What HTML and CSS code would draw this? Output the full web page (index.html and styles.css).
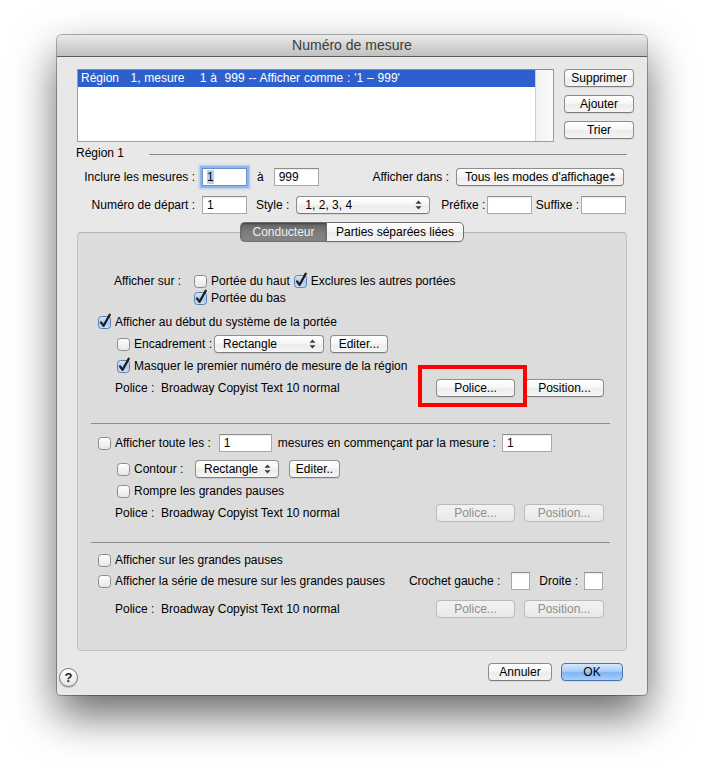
FILE: index.html
```html
<!DOCTYPE html>
<html lang="fr">
<head>
<meta charset="utf-8">
<title>Numéro de mesure</title>
<link rel="stylesheet" href="styles.css">
</head>
<body>
<svg class="defs" aria-hidden="true">
  <defs>
    <linearGradient id="gOff" x1="0" y1="0" x2="0" y2="1">
      <stop offset="0" stop-color="#ffffff"/>
      <stop offset="1" stop-color="#e6e6e6"/>
    </linearGradient>
    <linearGradient id="gOn" x1="0" y1="0" x2="0" y2="1">
      <stop offset="0" stop-color="#dbe9fa"/>
      <stop offset="0.5" stop-color="#a9c9ef"/>
      <stop offset="1" stop-color="#c8e0fa"/>
    </linearGradient>
    <g id="cbOff"><rect x="0.5" y="0.5" width="12" height="12" rx="3" fill="url(#gOff)" stroke="#8a8a8a"/></g>
    <g id="cbOn"><rect x="0.5" y="0.5" width="12" height="12" rx="3" fill="url(#gOn)" stroke="#5d7fae"/><path d="M3 6.3 L5.6 9.8 L11.8 -1.4" fill="none" stroke="#1b1b1b" stroke-width="2.2" stroke-linecap="round" stroke-linejoin="round"/></g>
    <g id="arrows"><path d="M0.5 3.8 L3.5 0.5 L6.5 3.8 Z M0.5 6.2 L3.5 9.5 L6.5 6.2 Z" fill="#3a3a3a"/></g>
  </defs>
</svg>

<div class="stage">
  <div class="window">
    <div class="titlebar">Numéro de mesure</div>
    <div class="content">
      <div class="top">
        <div class="list">
          <div class="list-rows">
            <div class="list-row sel">Région   1, mesure    1 à  999 -- Afficher comme : '1 – 999'</div>
          </div>
          <div class="list-scroll"></div>
        </div>
        <div class="side">
          <div class="btn">Supprimer</div>
          <div class="btn">Ajouter</div>
          <div class="btn">Trier</div>
        </div>
      </div>

      <div class="group-title"><span>Région 1</span><span class="rule"></span></div>

      <div class="frow frow1">
        <span class="flabel">Inclure les mesures :</span>
        <span class="field focus w45"><span class="hl">1</span></span>
        <span class="t-a">à</span>
        <span class="field w45 f999">999</span>
        <span class="t-dans">Afficher dans :</span>
        <span class="popup w168">Tous les modes d'affichage<svg class="arr" viewBox="0 0 7 10"><use href="#arrows"/></svg></span>
      </div>

      <div class="frow frow2">
        <span class="flabel">Numéro de départ :</span>
        <span class="field w45">1</span>
        <span class="t-style">Style :</span>
        <span class="popup w134">1, 2, 3, 4<svg class="arr" viewBox="0 0 7 10"><use href="#arrows"/></svg></span>
        <span class="t-pre">Préfixe :</span>
        <span class="field w45"></span>
        <span class="t-suf">Suffixe :</span>
        <span class="field w45 last"></span>
      </div>

      <div class="tabbox">
        <div class="tabs">
          <div class="tab sel">Conducteur</div>
          <div class="tab other">Parties séparées liées</div>
        </div>

        <div class="r r1">
          <span class="lab-sur">Afficher sur :</span>
          <span class="cb"><svg viewBox="0 0 13 13"><use href="#cbOff"/></svg>Portée du haut</span>
          <span class="cb cb-excl"><svg viewBox="0 0 13 13"><use href="#cbOn"/></svg>Exclures les autres portées</span>
        </div>
        <div class="r r2">
          <span class="cb"><svg viewBox="0 0 13 13"><use href="#cbOn"/></svg>Portée du bas</span>
        </div>
        <div class="r r3">
          <span class="cb"><svg viewBox="0 0 13 13"><use href="#cbOn"/></svg>Afficher au début du système de la portée</span>
        </div>
        <div class="r r4 i1">
          <span class="cb cbw97"><svg viewBox="0 0 13 13"><use href="#cbOff"/></svg>Encadrement :</span>
          <span class="popup w110">Rectangle<svg class="arr" viewBox="0 0 7 10"><use href="#arrows"/></svg></span>
          <span class="btn w58 ml6">Editer...</span>
        </div>
        <div class="r r5 i1">
          <span class="cb"><svg viewBox="0 0 13 13"><use href="#cbOn"/></svg>Masquer le premier numéro de mesure de la région</span>
        </div>
        <div class="r r6">
          <span class="police">Police :  Broadway Copyist Text 10 normal</span>
          <span class="btn w79 push hilite">Police...</span>
          <span class="btn w79 ml10">Position...</span>
        </div>

        <div class="sep sep1"></div>

        <div class="r s2r1">
          <span class="cb"><svg viewBox="0 0 13 13"><use href="#cbOff"/></svg>Afficher toute les :</span>
          <span class="field w53 ml8">1</span>
          <span class="t-mes">mesures en commençant par la mesure :</span>
          <span class="field w50 ml6">1</span>
        </div>
        <div class="r s2r2 i1">
          <span class="cb cbw78"><svg viewBox="0 0 13 13"><use href="#cbOff"/></svg>Contour :</span>
          <span class="popup w84">Rectangle<svg class="arr" viewBox="0 0 7 10"><use href="#arrows"/></svg></span>
          <span class="btn w51 ml10">Editer..</span>
        </div>
        <div class="r s2r3 i1">
          <span class="cb"><svg viewBox="0 0 13 13"><use href="#cbOff"/></svg>Rompre les grandes pauses</span>
        </div>
        <div class="r s2r4">
          <span class="police">Police :  Broadway Copyist Text 10 normal</span>
          <span class="btn dis w79 push">Police...</span>
          <span class="btn dis w80 ml9">Position...</span>
        </div>

        <div class="sep sep2"></div>

        <div class="r s3r1">
          <span class="cb"><svg viewBox="0 0 13 13"><use href="#cbOff"/></svg>Afficher sur les grandes pauses</span>
        </div>
        <div class="r s3r2">
          <span class="cb"><svg viewBox="0 0 13 13"><use href="#cbOff"/></svg>Afficher la série de mesure sur les grandes pauses</span>
          <span class="t-cro">Crochet gauche :</span>
          <span class="field w19 ml11"></span>
          <span class="t-dro">Droite :</span>
          <span class="field w19 ml6 mr1"></span>
        </div>
        <div class="r s3r3">
          <span class="police">Police :  Broadway Copyist Text 10 normal</span>
          <span class="btn dis w79 push">Police...</span>
          <span class="btn dis w80 ml9">Position...</span>
        </div>
      </div>

      <div class="footer">
        <span class="help">?</span>
        <span class="btn w64 push">Annuler</span>
        <span class="btn ok w62 ml9">OK</span>
      </div>
    </div>
  </div>
</div>
</body>
</html>
```

FILE: styles.css
```css
*, *::before, *::after { box-sizing: border-box; }

html, body {
  margin: 0;
  background: #ffffff;
}

body {
  font-family: "Liberation Sans", Arial, sans-serif;
  font-size: 12px;
  color: #000;
}

.defs {
  position: absolute;
  width: 0;
  height: 0;
  overflow: hidden;
}

.stage {
  padding: 35px 57px 0;
  height: 774px;
  overflow: hidden;
}

.window {
  width: 590px;
  height: 660px;
  background: #e8e8e8;
  border-radius: 5px 5px 4px 4px;
  box-shadow: 0 0 0 1px rgba(0, 0, 0, 0.3), 0 20px 44px rgba(0, 0, 0, 0.6);
}

.titlebar {
  height: 22px;
  border-radius: 5px 5px 0 0;
  background: linear-gradient(#eaeaea, #d0d0d0 60%, #c0c0c0);
  border-bottom: 1px solid #5a5a5a;
  text-align: center;
  font-size: 14px;
  line-height: 21px;
  color: #3c3c3c;
}

.content {
  padding: 12px 13px 0 20px;
}

/* top list + buttons */
.top {
  display: flex;
  gap: 10px;
  height: 73px;
}

.list {
  width: 477px;
  height: 73px;
  background: #fff;
  border: 1px solid #9d9d9d;
  border-top-color: #8c8c8c;
  display: flex;
}

.list-rows { flex: 1; }

.list-row {
  height: 17px;
  line-height: 17px;
  padding-left: 3px;
  white-space: pre;
  word-spacing: 0.5px;
}

.list-row.sel {
  background: #2d5fcd;
  color: #fff;
}

.list-scroll {
  width: 18px;
  border-left: 1px solid #cfcfcf;
  background: linear-gradient(to right, #f2f2f2, #fbfbfb);
}

.side {
  width: 70px;
  display: flex;
  flex-direction: column;
  gap: 8px;
}

/* buttons */
.btn {
  height: 18px;
  border: 1px solid #8d8d8d;
  border-bottom-color: #7c7c7c;
  border-radius: 4px;
  background: linear-gradient(#ffffff, #f7f7f7 45%, #ececec 55%, #f5f5f5);
  box-shadow: 0 1px 0 rgba(0, 0, 0, 0.07);
  display: flex;
  align-items: center;
  justify-content: center;
  line-height: 16px;
  white-space: nowrap;
  flex: none;
}

.btn.dis {
  border-color: #bababa;
  color: #8e8e8e;
  background: linear-gradient(#f2f2f2, #e8e8e8);
  box-shadow: none;
}

.btn.ok {
  border-color: #4f73aa;
  background: linear-gradient(#d6e8fc, #a9cef7 45%, #7fb4f0 55%, #a4d0fb);
}

.popup {
  height: 18px;
  border: 1px solid #8d8d8d;
  border-bottom-color: #7c7c7c;
  border-radius: 4px;
  background: linear-gradient(#ffffff, #f7f7f7 45%, #ececec 55%, #f5f5f5);
  box-shadow: 0 1px 0 rgba(0, 0, 0, 0.07);
  display: flex;
  align-items: center;
  justify-content: space-between;
  padding: 0 7px 0 8px;
  white-space: nowrap;
  flex: none;
}

.arr {
  width: 7px;
  height: 10px;
}

/* text fields */
.field {
  height: 18px;
  background: #fff;
  border: 1px solid #a8a8a8;
  border-top-color: #8c8c8c;
  box-shadow: inset 0 1px 1px rgba(0, 0, 0, 0.08);
  padding-left: 4px;
  line-height: 16px;
  flex: none;
}

.field.focus {
  border-color: #6d8fc6;
  box-shadow: 0 0 0 2px #8db6ec, 0 0 2px 3px rgba(110, 160, 230, 0.45);
}

.hl { background: #b3d1f6; }

/* widths */
.w19 { width: 19px; }
.w45 { width: 45px; }
.w50 { width: 50px; }
.w51 { width: 51px; }
.w53 { width: 53px; }
.w58 { width: 58px; }
.w62 { width: 62px; }
.w64 { width: 64px; }
.w79 { width: 79px; }
.w80 { width: 80px; }
.w84 { width: 84px; }
.w110 { width: 110px; }
.w134 { width: 134px; }
.w168 { width: 168px; }

.ml6 { margin-left: 6px; }
.ml8 { margin-left: 8px; }
.ml9 { margin-left: 9px; }
.ml10 { margin-left: 10px; }
.ml11 { margin-left: 11px; }
.mr1 { margin-right: 1px; }
.push { margin-left: auto; }

/* group title */
.group-title {
  display: flex;
  align-items: center;
  height: 14px;
  margin-top: 4px;
  margin-left: -1px;
}

.rule {
  flex: 1;
  height: 1px;
  background: #8a8a8a;
  margin: 3px 7px 0 25px;
}

/* form rows */
.frow {
  display: flex;
  align-items: center;
  height: 18px;
}

.frow1 { margin-top: 8px; }
.frow2 { margin-top: 10px; }

.flabel {
  width: 118px;
  text-align: right;
  margin-right: 7px;
  white-space: nowrap;
}

.t-a { margin-left: 10px; margin-right: 10px; }
.t-dans { margin-left: auto; margin-right: 7px; }
.frow1 .popup { margin-right: 10px; }
.t-style { margin-left: 9px; margin-right: 7px; }
.t-pre { margin-left: 11px; margin-right: 2px; }
.t-suf { margin-left: auto; margin-right: 2px; }
.field.last { margin-right: 8px; }

/* tab box */
.tabbox {
  margin-top: 18px;
  width: 550px;
  height: 419px;
  border: 1px solid #c3c3c3;
  border-top-color: #b5b5b5;
  border-radius: 4px;
  background: #dcdcdc;
  padding: 0 22px 0 20px;
}

.tabs {
  display: flex;
  justify-content: center;
  margin: -11px -22px 0 -20px;
  height: 20px;
}

.tab {
  height: 20px;
  border: 1px solid #6e6e6e;
  line-height: 18px;
  text-align: center;
  white-space: nowrap;
}

.tab.sel {
  width: 86px;
  border-right: none;
  border-radius: 5px 0 0 5px;
  background: linear-gradient(#626262, #7c7c7c 50%, #858585);
  color: #efefef;
  box-shadow: inset 0 1px 2px rgba(0, 0, 0, 0.35);
}

.tab.other {
  width: 138px;
  border-radius: 0 5px 5px 0;
  background: linear-gradient(#ffffff, #f5f5f5 50%, #ebebeb 50%, #f4f4f4);
  box-shadow: 0 1px 0 rgba(0, 0, 0, 0.08);
}

.r {
  display: flex;
  align-items: center;
  height: 18px;
  white-space: nowrap;
}

.i1 { padding-left: 19px; }

.cb {
  display: flex;
  align-items: center;
  flex: none;
}

.cb svg {
  width: 13px;
  height: 13px;
  margin-right: 4px;
  overflow: visible;
  flex: none;
}

.cbw97 { width: 97px; }
.cbw78 { width: 78px; }

.lab-sur {
  margin-left: 16px;
  width: 80px;
}

.cb-excl { margin-left: 4px; }

.police {
  padding-left: 17px;
  white-space: pre;
}

.hilite { position: relative; }

.hilite::after {
  content: "";
  position: absolute;
  left: -19px;
  top: -15px;
  width: 109px;
  height: 42px;
  border: 4px solid #ff0000;
}

.t-mes { margin-left: 6px; }
.t-cro { margin-left: auto; }
.t-dro { margin-left: 9px; }

.r1 { margin-top: 30px; }
.r2 { margin-top: -1px; padding-left: 96px; }
.r3 { margin-top: 6px; }
.r4 { margin-top: 4px; }
.r5 { margin-top: 4px; }
.r6 { margin-top: 4px; }

.sep {
  height: 1px;
  background: #8e8e8e;
  margin-left: -7px;
  margin-right: -6px;
}

.sep1 { margin-top: 26px; }
.s2r1 { margin-top: 10px; }
.s2r2 { margin-top: 8px; }
.s2r3 { margin-top: 4px; }
.s2r4 { margin-top: 4px; }
.sep2 { margin-top: 20px; }
.s3r1 { margin-top: 8px; }
.s3r2 { margin-top: 3px; }
.s3r3 { margin-top: 10px; }

/* footer */
.footer {
  display: flex;
  align-items: flex-start;
  margin-top: 12px;
  height: 18px;
}

.footer .ok { margin-right: 11px; }

.help {
  width: 19px;
  height: 19px;
  margin-left: -18px;
  margin-top: 5px;
  border-radius: 50%;
  border: 1px solid #7b7b7b;
  background: linear-gradient(#ffffff, #e4e4e4);
  box-shadow: 0 1px 1px rgba(0, 0, 0, 0.2);
  display: flex;
  align-items: center;
  justify-content: center;
  font-weight: bold;
  font-size: 13px;
  color: #222;
  flex: none;
}
```
